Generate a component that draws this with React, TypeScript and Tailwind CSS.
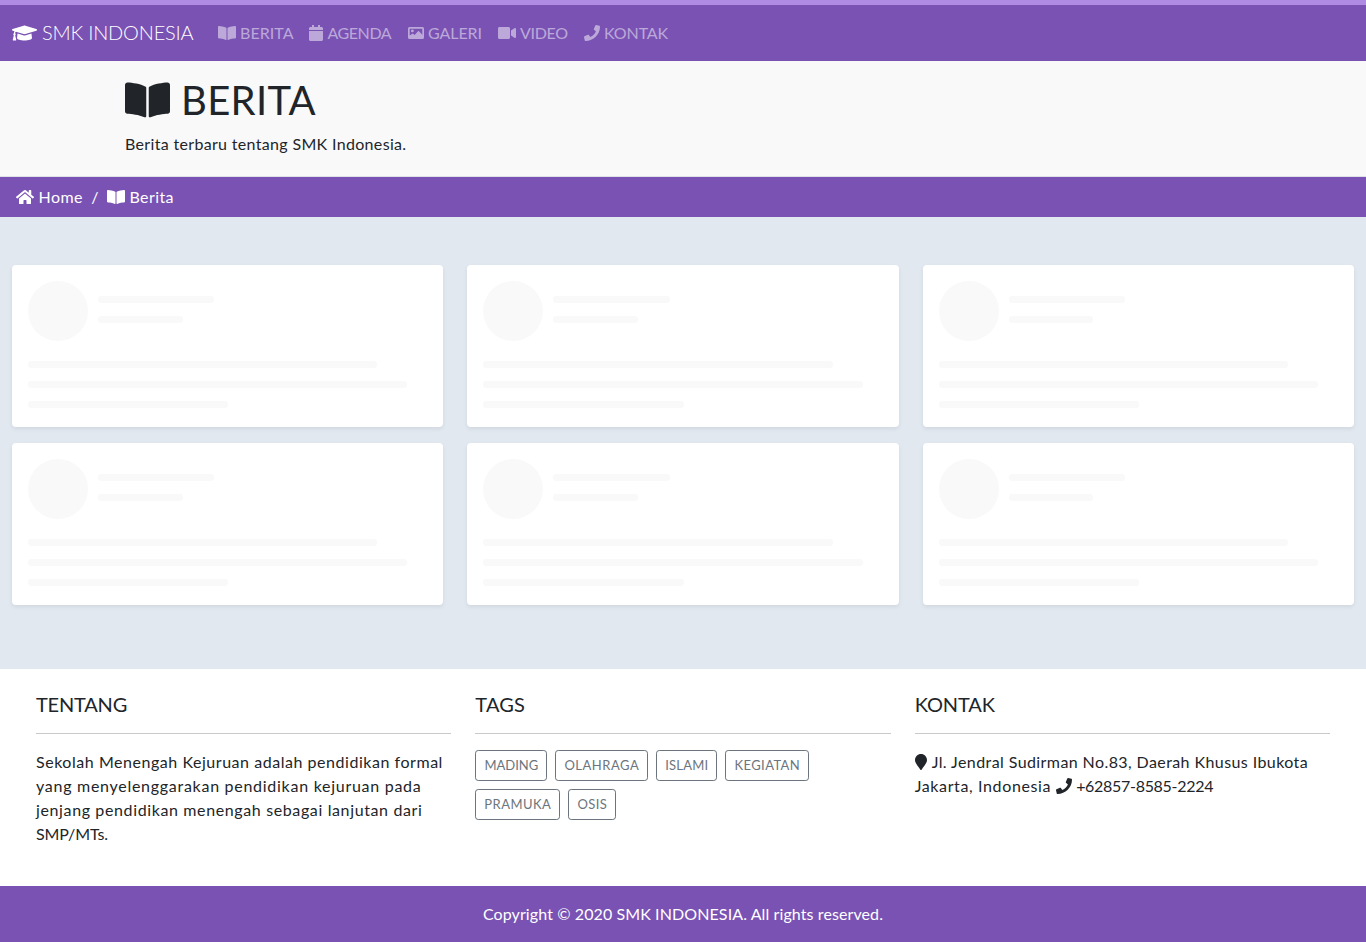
import type { ReactNode } from "react";
import {
  FaBookOpen,
  FaCalendar,
  FaGraduationCap,
  FaHome,
  FaMapMarker,
  FaPhone,
  FaVideo,
} from "react-icons/fa";

function GalleryIcon() {
  return (
    <svg viewBox="0 0 16 16" className="size-4 shrink-0" fill="currentColor" aria-hidden="true">
      <path
        fillRule="evenodd"
        d="M1.5 2h13A1.5 1.5 0 0 1 16 3.500v9a1.500 1.500 0 0 1-1.500 1.500h-13A1.500 1.500 0 0 1 0 12.500v-9A1.500 1.500 0 0 1 1.500 2ZM1.700 3.700v6.900L4.800 8.400l1.800 1.500 3.900-4.100 3.800 3.900v-6ZM4.400 4.500a1.400 1.400 0 1 1 0 2.800a1.400 1.400 0 1 1 0-2.800Z"
      />
    </svg>
  );
}

const navItems = [
  { label: "BERITA", icon: <FaBookOpen className="h-4 w-[18px] shrink-0" />, text: "tracking-[0.06px]", box: "w-[91.5px]" },
  { label: "AGENDA", icon: <FaCalendar className="h-4 w-[14px] shrink-0" />, text: "tracking-[-0.45px]", box: "w-[98.5px]" },
  { label: "GALERI", icon: <GalleryIcon />, text: "tracking-[-0.07px]", box: "w-[90px]" },
  { label: "VIDEO", icon: <FaVideo className="h-4 w-[18px] shrink-0" />, text: "tracking-[-0.3px]", box: "w-[86px]" },
  { label: "KONTAK", icon: <FaPhone className="h-4 w-4 shrink-0" />, text: "tracking-[-0.1px]", box: "w-[100px]" },
];

const tags = [
  { label: "MADING", style: "w-[72px]" },
  { label: "OLAHRAGA", style: "w-[93px] tracking-[0.5px]" },
  { label: "ISLAMI", style: "w-[61px] tracking-[0.2px]" },
  { label: "KEGIATAN", style: "w-[84px] tracking-[0.4px]" },
  { label: "PRAMUKA", style: "w-[85px] tracking-[0.45px]" },
  { label: "OSIS", style: "w-[48px] tracking-[0.4px]" },
];

function SkeletonCard() {
  return (
    <div className="h-[162px] rounded bg-white p-4 shadow-[0_2px_4px_rgba(0,0,0,0.075)]">
      <div className="flex gap-2.5">
        <div className="size-[60px] rounded-full bg-[#f9f9f9]" />
        <div className="flex flex-col gap-[13.5px] pt-[15px]">
          <div className="h-[6.5px] w-[116.3px] rounded-[3px] bg-[#f9f9f9]" />
          <div className="h-[6.5px] w-[84.5px] rounded-[3px] bg-[#f9f9f9]" />
        </div>
      </div>
      <div className="mt-5 flex flex-col gap-[13.5px]">
        <div className="h-[6.5px] w-[349.3px] rounded-[3px] bg-[#f9f9f9]" />
        <div className="h-[6.5px] w-[379.3px] rounded-[3px] bg-[#f9f9f9]" />
        <div className="h-[6.5px] w-[200.2px] rounded-[3px] bg-[#f9f9f9]" />
      </div>
    </div>
  );
}

function FooterColumn({ title, spacing, children }: { title: string; spacing: string; children: ReactNode }) {
  return (
    <section>
      <h5 className={`text-xl leading-6 ${spacing}`}>{title}</h5>
      <hr className="mt-[17px] mb-4 border-[#c8c9ca]" />
      {children}
    </section>
  );
}

export default function App() {
  return (
    <div className="flex h-[942px] flex-col bg-[#e2e8f0] font-['Lato',sans-serif] text-base text-[#212529]">
      <div className="h-[5px] bg-[#b08be3]" />
      <nav className="flex h-14 items-center bg-[#7952b3] px-3">
        <a className="flex w-[197.5px] items-center gap-[5px] text-xl font-light whitespace-nowrap text-white">
          <FaGraduationCap className="h-5 w-[25px] shrink-0" />
          <span className="pb-0.5 tracking-[-0.2px]">SMK INDONESIA</span>
        </a>
        {navItems.map((item) => (
          <a key={item.label} className={`flex items-center gap-[4.5px] px-2 whitespace-nowrap text-white/50 ${item.box}`}>
            {item.icon}
            <span className={item.text}>{item.label}</span>
          </a>
        ))}
      </nav>

      <header className="h-[116px] border-b border-[#dee2e6] bg-[#f9f9f9] px-[125px] pt-[15px]">
        <h1 className="flex h-12 items-center gap-[11px] text-[40px] leading-[48px]">
          <FaBookOpen className="h-10 w-[45px] shrink-0" />
          <span className="tracking-[0.3px]">BERITA</span>
        </h1>
        <p className="mt-2 leading-6 tracking-[0.33px]">Berita terbaru tentang SMK Indonesia.</p>
      </header>

      <ol className="flex h-10 items-center gap-2 bg-[#7952b3] px-4 text-white">
        <li className="flex items-center gap-[4.5px]">
          <FaHome className="h-4 w-[18px]" />
          <span className="tracking-[0.45px]">Home</span>
        </li>
        <li className="w-2 text-center">/</li>
        <li className="flex items-center gap-[4.5px]">
          <FaBookOpen className="h-4 w-[18px]" />
          <span className="tracking-[0.4px]">Berita</span>
        </li>
      </ol>

      <main className="grid h-[452px] grid-cols-3 content-start gap-x-6 gap-y-4 px-3 pt-12">
        <SkeletonCard />
        <SkeletonCard />
        <SkeletonCard />
        <SkeletonCard />
        <SkeletonCard />
        <SkeletonCard />
      </main>

      <footer>
        <div className="grid h-[217px] grid-cols-3 gap-6 bg-white px-9 pt-[23px]">
          <FooterColumn title="TENTANG" spacing="tracking-[-0.2px]">
            <p className="leading-6 whitespace-nowrap">
              <span className="tracking-[0.54px]">Sekolah Menengah Kejuruan adalah pendidikan formal</span>
              <br />
              <span className="tracking-[0.725px]">yang menyelenggarakan pendidikan kejuruan pada</span>
              <br />
              <span className="tracking-[0.626px]">jenjang pendidikan menengah sebagai lanjutan dari</span>
              <br />
              <span className="tracking-[-0.1px]">SMP/MTs.</span>
            </p>
          </FooterColumn>
          <FooterColumn title="TAGS" spacing="tracking-[0.15px]">
            <div className="flex flex-wrap gap-2 pr-12">
              {tags.map((tag) => (
                <a
                  key={tag.label}
                  className={`flex h-[31px] items-center justify-center rounded-[3.2px] border border-[#6c757d] text-[13px] text-[#6c757d] ${tag.style}`}
                >
                  {tag.label}
                </a>
              ))}
            </div>
          </FooterColumn>
          <FooterColumn title="KONTAK" spacing="tracking-[-0.1px]">
            <address className="flex flex-col leading-6 whitespace-nowrap not-italic">
              <span className="flex items-center gap-[5px]">
                <FaMapMarker className="h-4 w-3" />
                <span className="tracking-[0.41px]">Jl. Jendral Sudirman No.83, Daerah Khusus Ibukota</span>
              </span>
              <span className="flex items-center gap-[4.5px]">
                <span className="tracking-[0.63px]">Jakarta, Indonesia</span>
                <FaPhone className="size-4" />
                <span className="tracking-[-0.3px]">+62857-8585-2224</span>
              </span>
            </address>
          </FooterColumn>
        </div>
        <div className="flex h-14 items-center justify-center bg-[#7952b3] text-white">
          <span className="tracking-[0.1px]">Copyright © 2020 SMK INDONESIA. All rights reserved.</span>
        </div>
      </footer>
    </div>
  );
}
